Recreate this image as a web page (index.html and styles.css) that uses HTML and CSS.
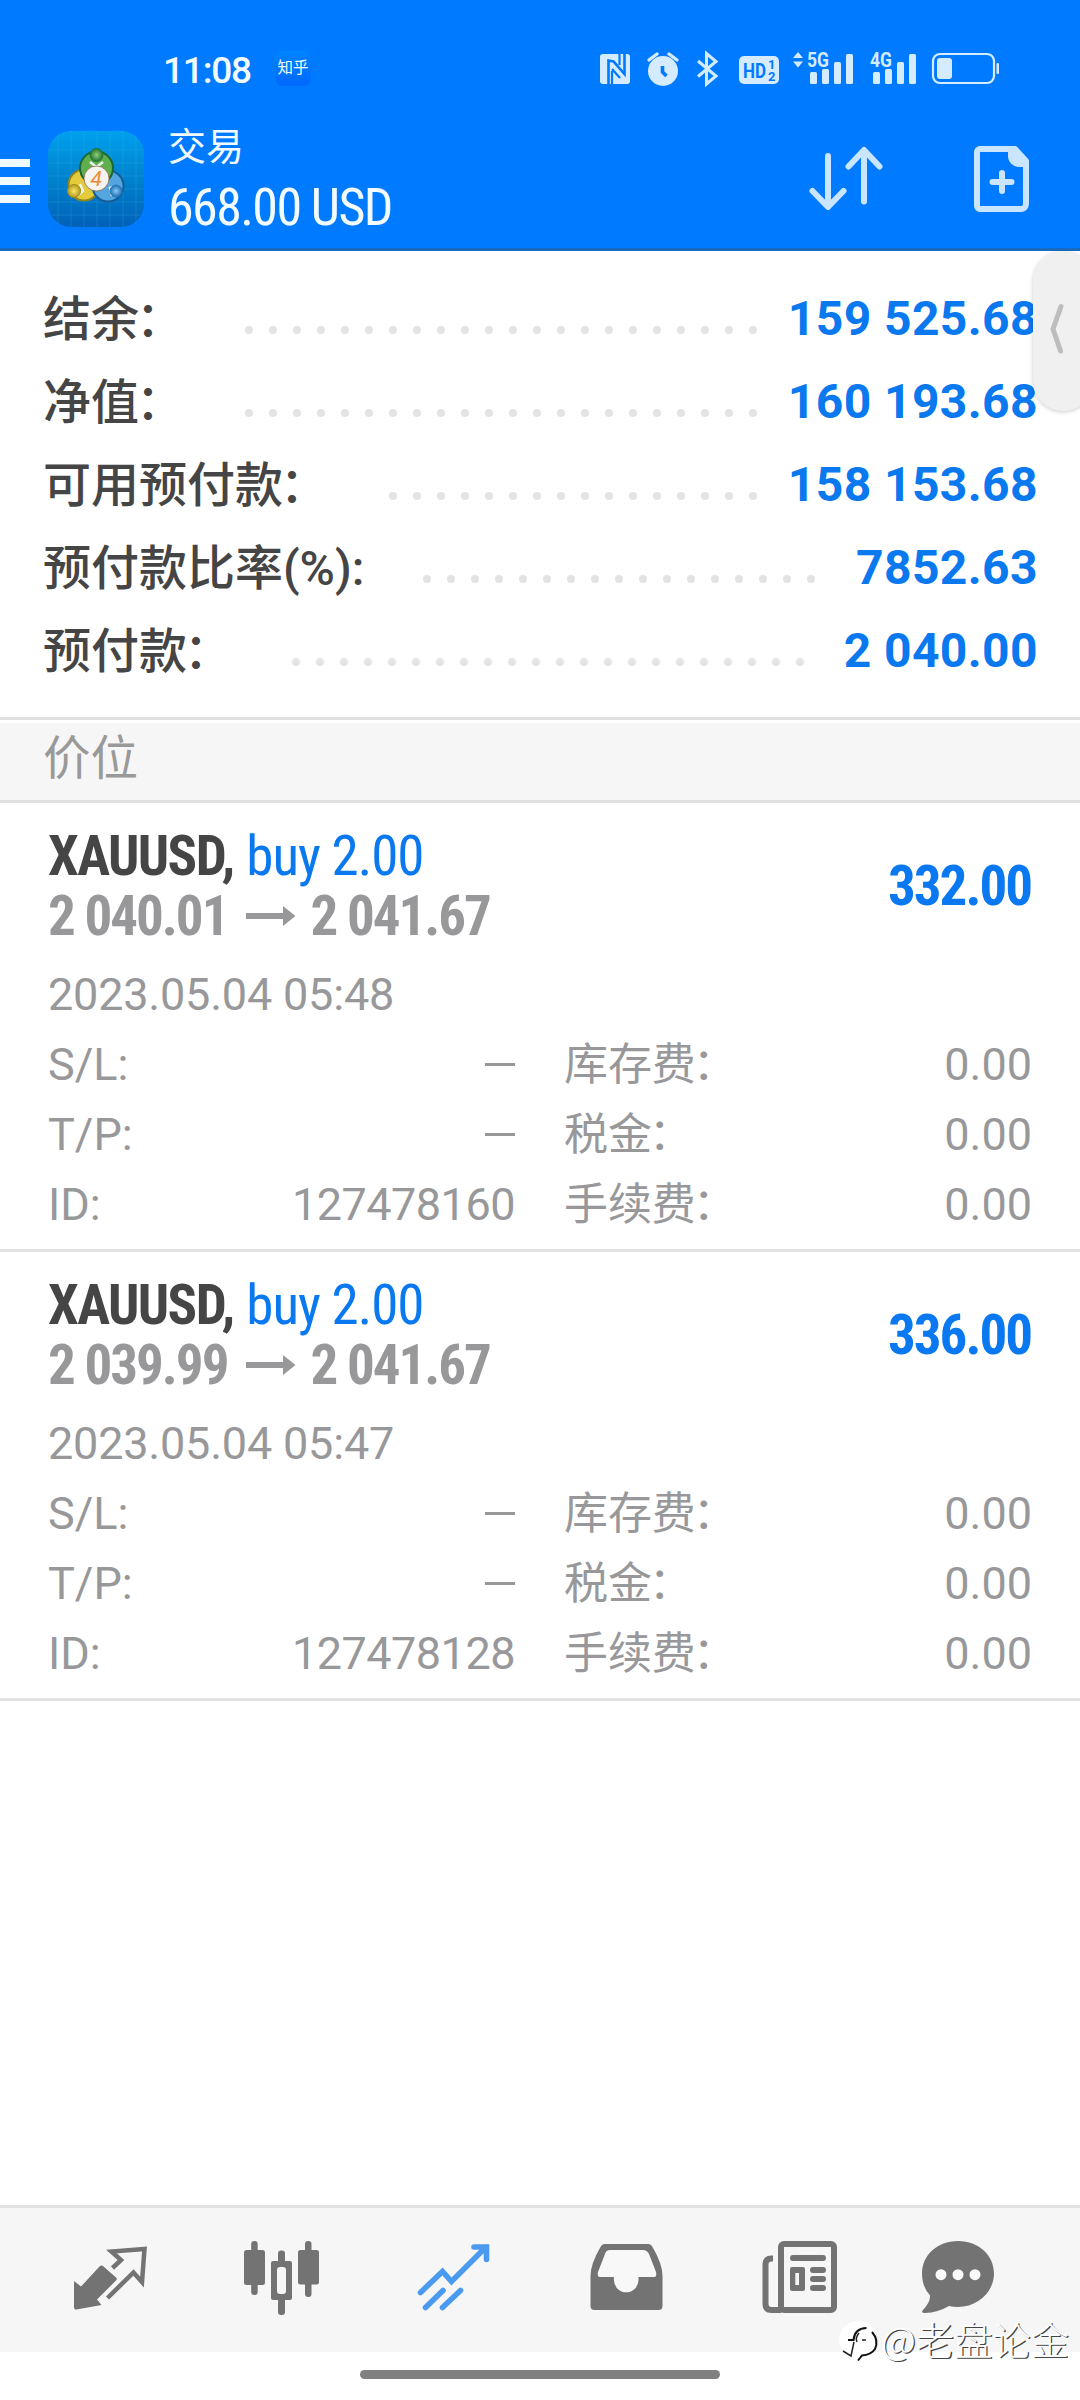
FILE: index.html
```html
<!DOCTYPE html>
<html lang="zh-CN">
<head>
<meta charset="utf-8">
<title>交易</title>
<link rel="stylesheet" href="styles.css">
</head>
<body>
<div class="screen">
  <header class="top">
    <div class="status">
      <span class="clock">11:08</span>
      <span class="zhihu">知乎</span>
      <svg class="status-icons" width="410" height="44" viewBox="595 46 410 44">
        <g fill="#d5ebff">
          <rect x="600" y="54" width="30" height="30" rx="3"/>
          <path d="M608.500 85V60.500l5 1 11 12.500V53" fill="none" stroke="#007aff" stroke-width="2.600"/>
          <path d="M619.500 53v12M612 71v14M612 69l8 9" fill="none" stroke="#007aff" stroke-width="2.200"/>
          <circle cx="663" cy="71" r="15"/>
          <path d="M649 60l8-6M677 60l-8-6" stroke="#d5ebff" stroke-width="3.4" stroke-linecap="round"/>
          <path d="M662.5 66v6l4 4" fill="none" stroke="#007aff" stroke-width="3.6"/>
          <path d="M698 61l18 15-9.500 8V53.500l9.500 8-18 15" fill="none" stroke="#d5ebff" stroke-width="3"/>
          <rect x="739" y="56" width="40" height="28" rx="5"/>
          <path d="M793 58l5-6 5 6zM793 61.500l5 6 5-6z"/>
          <rect x="810" y="72" width="7" height="12" rx="1.500"/><rect x="822" y="69" width="7" height="15" rx="1.500"/><rect x="834" y="62" width="7" height="22" rx="1.500"/><rect x="846" y="54" width="7" height="30" rx="1.500"/>
          <rect x="873" y="72" width="7" height="12" rx="1.500"/><rect x="885" y="69" width="7" height="15" rx="1.500"/><rect x="897" y="62" width="7" height="22" rx="1.500"/><rect x="909" y="54" width="7" height="30" rx="1.500"/>
          <rect x="933" y="54" width="61" height="29" rx="7" fill="none" stroke="#d5ebff" stroke-width="2.200"/>
          <rect x="937" y="58" width="15" height="21" rx="3"/><rect x="996.500" y="63" width="2.500" height="11" rx="1"/>
        </g>
        <text class="hd" x="743" y="78" textLength="23" lengthAdjust="spacingAndGlyphs">HD</text>
        <text class="hd-n" x="768" y="69">1</text><text class="hd-n" x="768" y="81">2</text>
        <text class="net" x="807" y="67" textLength="22" lengthAdjust="spacingAndGlyphs">5G</text>
        <text class="net" x="870" y="67" textLength="22" lengthAdjust="spacingAndGlyphs">4G</text>
      </svg>
    </div>
    <div class="appbar">
      <div class="burger"><i></i><i></i><i></i></div>
      <svg class="logo" width="96" height="96" viewBox="48 131 96 96">
        <defs>
          <linearGradient id="lb" x1="0" y1="0" x2="0" y2="1"><stop offset="0" stop-color="#00a0ee"/><stop offset=".5" stop-color="#0082cc"/><stop offset="1" stop-color="#0061b8"/></linearGradient>
          <radialGradient id="gg"><stop offset="0" stop-color="#8fcf7c"/><stop offset="1" stop-color="#23742f"/></radialGradient>
          <radialGradient id="gy"><stop offset="0" stop-color="#fbe66e"/><stop offset="1" stop-color="#b59a1c"/></radialGradient>
          <radialGradient id="gb"><stop offset="0" stop-color="#8ccbf5"/><stop offset="1" stop-color="#1c6fb5"/></radialGradient>
        </defs>
        <rect x="48" y="131" width="96" height="96" rx="23" fill="url(#lb)"/>
        <path d="M58 134v90M71 131v96M84 131v96M97 131v96M110 131v96M123 131v96M136 135v88M48 150h96M48 163h96M48 176h96M48 189h96M48 202h96M52 215h88" stroke="#45b7f0" stroke-opacity=".22"/>
        <circle cx="84" cy="185" r="15.500" fill="#e3cb3c" stroke="#8b8420" stroke-width="2"/>
        <circle cx="108" cy="186" r="15.500" fill="#53a6df" stroke="#155d96" stroke-width="2"/>
        <circle cx="96.500" cy="168" r="16.500" fill="#5fb04d" stroke="#1b6632" stroke-width="2"/>
        <path d="M90 162l6.500 5 6.500-5M80 184l3 7-6 5M112 196l-2-8 8-2" fill="none" stroke="#e9f7ef" stroke-width="2.500"/>
        <circle cx="96.500" cy="155" r="6.500" fill="url(#gg)" stroke="#23743a"/>
        <circle cx="74" cy="191" r="6.500" fill="url(#gy)" stroke="#9d8a1e"/>
        <circle cx="116" cy="191" r="6" fill="url(#gb)" stroke="#2676b5"/>
        <circle cx="96.500" cy="178.500" r="12.500" fill="#f6f4f1" stroke="#8a6a4a" stroke-width=".8"/>
        <text class="logo-n" x="90.500" y="186">4</text>
      </svg>
      <div class="titles"><span class="title">交易</span><span class="sum cond">668.00 USD</span></div>
      <svg class="actions" width="240" height="90" viewBox="800 136 240 90">
        <g fill="none" stroke="#c9e5ff" stroke-width="6" stroke-linecap="round" stroke-linejoin="round">
          <path d="M828 156v50M812.500 191l15.500 16 15.500-16M864 201.500v-50M848.500 166.500L864 150l15.500 16.500"/>
          <path d="M980 149h35l11 12v43a5 5 0 0 1-5 5h-41a3 3 0 0 1-3-3v-54a3 3 0 0 1 3-3z"/>
          <path d="M1002 173v18M992.500 182h19"/>
        </g>
        <path d="M1008 149h7l12 13v5h-8a11 11 0 0 1-11-11z" fill="#c9e5ff"/>
      </svg>
    </div>
  </header>

  <section class="summary">
    <div class="row"><span class="lab">结余<i class="colon">：</i></span><svg class="dots r1" height="8"><line x1="4" y1="4" x2="508.100" y2="4"/></svg><b>159 525.68</b></div>
    <div class="row"><span class="lab">净值<i class="colon">：</i></span><svg class="dots r1" height="8"><line x1="4" y1="4" x2="508.100" y2="4"/></svg><b>160 193.68</b></div>
    <div class="row"><span class="lab">可用预付款<i class="colon">：</i></span><svg class="dots r3" height="8"><line x1="4" y1="4" x2="364.100" y2="4"/></svg><b>158 153.68</b></div>
    <div class="row"><span class="lab">预付款比率(%):</span><svg class="dots r4" height="8"><line x1="4" y1="4" x2="388.100" y2="4"/></svg><b>7852.63</b></div>
    <div class="row"><span class="lab">预付款<i class="colon">：</i></span><svg class="dots r5" height="8"><line x1="4" y1="4" x2="508.100" y2="4"/></svg><b>2 040.00</b></div>
  </section>

  <h2 class="section">价位</h2>

  <article class="pos">
    <div class="head">
      <div class="lines">
        <div class="sym cond"><b>XAUUSD,</b> <span>buy 2.00</span></div>
        <div class="price cond"><span>2 040.01</span><svg width="50" height="20" viewBox="0 0 50 20"><path d="M0 7h37V0l12.500 10L37 20v-7H0z" fill="#98989a"/></svg><span>2 041.67</span></div>
      </div>
      <div class="profit cond">332.00</div>
    </div>
    <div class="date">2023.05.04 05:48</div>
    <div class="grid">
      <span>S/L:</span><span class="v"><i class="dash"></i></span><span class="c">库存费<i class="colon">：</i></span><span class="v">0.00</span>
      <span>T/P:</span><span class="v"><i class="dash"></i></span><span class="c">税金<i class="colon">：</i></span><span class="v">0.00</span>
      <span>ID:</span><span class="v id">127478160</span><span class="c">手续费<i class="colon">：</i></span><span class="v">0.00</span>
    </div>
  </article>
  <article class="pos">
    <div class="head">
      <div class="lines">
        <div class="sym cond"><b>XAUUSD,</b> <span>buy 2.00</span></div>
        <div class="price cond"><span>2 039.99</span><svg width="50" height="20" viewBox="0 0 50 20"><path d="M0 7h37V0l12.500 10L37 20v-7H0z" fill="#98989a"/></svg><span>2 041.67</span></div>
      </div>
      <div class="profit cond">336.00</div>
    </div>
    <div class="date">2023.05.04 05:47</div>
    <div class="grid">
      <span>S/L:</span><span class="v"><i class="dash"></i></span><span class="c">库存费<i class="colon">：</i></span><span class="v">0.00</span>
      <span>T/P:</span><span class="v"><i class="dash"></i></span><span class="c">税金<i class="colon">：</i></span><span class="v">0.00</span>
      <span>ID:</span><span class="v id">127478128</span><span class="c">手续费<i class="colon">：</i></span><span class="v">0.00</span>
    </div>
  </article>

  <nav class="tabs">
    <svg viewBox="24 2208 172 144"><path d="M74 2281l7 5.500 18.500-20a3 3 0 0 1 4 0l12.500 11a2 2 0 0 1 0 3L97 2299.500l4.500 5.500-25 4.500a2 2 0 0 1-2.500-2z" fill="#737373"/><path d="M112.500 2268l8.500-8-9.500-8.500 33-2.500-2.500 33-8.500-9.500-26 25.500" fill="none" stroke="#737373" stroke-width="4.500"/></svg>
    <svg viewBox="196 2208 172 144"><g fill="#737373"><rect x="251.200" y="2241" width="6.500" height="54" rx="3"/><rect x="244" y="2250" width="21" height="35" rx="2.500"/><rect x="278" y="2250.500" width="7" height="64.500" rx="3"/><rect x="271" y="2261" width="21" height="39" rx="2"/><rect x="305" y="2241" width="6.500" height="56" rx="3"/><rect x="298" y="2250" width="21" height="34.500" rx="2.500"/></g><rect x="277" y="2267" width="9" height="27" rx="3" fill="#f6f6f6"/></svg>
    <svg viewBox="368 2208 172 144"><path d="M420.500 2292.500l22-21 9 10 34.500-34.500M474 2247h12.500v12.500M443 2290.500l-17.500 17M460.500 2290.500l-18 17" fill="none" stroke="#4a9bf0" stroke-width="5.600" stroke-linecap="round"/></svg>
    <svg viewBox="540 2208 172 144"><path d="M605 2244h43q3 0 4.500 3 10 17 10 29v30q0 4-4 4h-64q-4 0-4-4v-30q0-12 10-29 1.500-3 4.500-3z" fill="#737373"/><path d="M610 2250h33q4 0 6 4l7 18q1 5-2 5h-15.500v3a12.300 12.300 0 0 1-24.600 0v-3H600q-3 0-2-5l7-18q1-4 5-4z" fill="#f8f8f8"/></svg>
    <svg viewBox="712 2208 172 144"><g fill="none" stroke="#737373"><rect x="781" y="2244" width="53" height="66" rx="3" stroke-width="6"/><path d="M773 2258.500h-1.500q-6 0-6 6V2304q0 6 6 6h10" stroke-width="6"/><path d="M793 2258h30M813 2270h10M813 2279h10M813 2288h10" stroke-width="6" stroke-linecap="round"/></g><path d="M792 2267h11q2 0 2 2v20q0 2-2 2h-11q-2 0-2-2v-20q0-2 2-2zm3.300 6v12h3.700v-12z" fill="#737373" fill-rule="evenodd"/></svg>
    <svg viewBox="884 2208 172 144"><path d="M958 2241c21 0 36 14.500 36 32.500s-16 33.500-36 33.500q-5 0-9-1-11 6.500-24 7-4 0-2.500-2.500 8-8 7.500-15-8-9-8-22c0-18 15-32.500 36-32.500z" fill="#737373"/><g fill="#fafafa"><circle cx="941" cy="2274.700" r="5.500"/><circle cx="958" cy="2274.700" r="5.500"/><circle cx="975" cy="2274.700" r="5.500"/></g></svg>
  </nav>
  <footer class="home"><i></i></footer>

  <div class="handle"><svg width="16" height="54" viewBox="0 0 16 54"><path d="M12 4.500L4 27l7.500 22" fill="none" stroke="#bdbdbd" stroke-width="5" stroke-linecap="round" stroke-linejoin="round"/></svg></div>
  <div class="mark">
    <svg width="44" height="46" viewBox="836 2318 44 46"><circle cx="857" cy="2340" r="19" fill="#fff"/><path d="M847 2340h5.500q1-11.500 13-12M871 2332q7 8 3 17-4 6-13 6.500l-4 5" fill="none" stroke="#111" stroke-width="2"/><path d="M853 2342l-3 14-8-5M861 2340h4M858 2333q-4 5-2 9" fill="none" stroke="#222" stroke-width="1.500"/></svg>
    <span>@老盘论金</span>
  </div>
</div>
</body>
</html>
```
FILE: styles.css
```css
* { box-sizing: border-box; }
body { margin: 0; background: #fff; font-family: Roboto, "Noto Sans CJK SC", sans-serif; }
i { font-style: normal; }
svg { display: block; flex: none; }
.screen { position: relative; width: 1080px; height: 2400px; overflow: hidden; display: flex; flex-direction: column; background: #fff; }
.cond { font-family: Roboto, "Noto Sans CJK SC", sans-serif; font-stretch: 75%; white-space: pre; }
.colon { margin-left: -3px; }

.top { height: 251px; background: #007aff; border-bottom: 3px solid #1a6bbd; color: #f2fbff; flex: none; }
.status { display: flex; height: 90px; padding-top: 46px; align-items: center; }
.clock { margin-left: 163px; width: 112px; padding-top: 5px; font-size: 37px; font-weight: 500; font-stretch: 90%; letter-spacing: -1.2px; line-height: 44px; }
.zhihu { width: 36px; height: 35px; border-radius: 8px; background: linear-gradient(#0084ff, #0068ff); font-size: 15.500px; line-height: 35px; text-align: center; }
.status-icons { margin-left: 284px; }
.hd { font: 700 21px Roboto, sans-serif; fill: #007aff; }
.hd-n { font: 700 13px Roboto, sans-serif; fill: #007aff; }
.net { font: 700 21px Roboto, sans-serif; fill: #d5ebff; }
.appbar { display: flex; height: 158px; align-items: flex-start; }
.burger { width: 30px; margin-top: 69px; display: flex; flex-direction: column; gap: 10px; }
.burger i { height: 8px; background: #eefaff; }
.logo { margin: 41px 0 0 18px; }
.logo-n { font: italic 400 21px Roboto, sans-serif; fill: #f08a35; }
.titles { display: flex; flex-direction: column; margin: 31px 0 0 24px; width: 632px; }
.title { font-size: 38px; line-height: 52px; }
.sum { font-size: 52px; line-height: 70px; letter-spacing: -1.600px; }
.actions { margin-top: 46px; }

.summary { padding: 26px 42px 0 43px; height: 466px; flex: none; }
.row { display: flex; height: 83px; align-items: center; color: #454545; }
.lab { flex: 1; font-size: 48px; font-weight: 500; line-height: 83px; padding-top: 2px; white-space: nowrap; }
.row b { font-size: 48px; line-height: 83px; letter-spacing: .4px; color: #0a78ee; white-space: pre; text-align: right; }
.dots { margin-top: 22px; }
.dots line { stroke: #e3e3e3; stroke-width: 8; stroke-linecap: round; stroke-dasharray: 0 24; }
.r1 { width: 512px; margin-right: 31px; }
.r3 { width: 368px; margin-right: 31px; }
.r4 { width: 392px; margin-right: 41px; }
.r5 { width: 512px; margin-right: 40px; }

.section { margin: 0; height: 86px; flex: none; padding-left: 43px; border-top: 3px solid #e1e1e1; border-bottom: 3px solid #e1e1e1; background: #f6f6f6; box-shadow: inset 0 3px #fff; font-size: 47.500px; font-weight: 400; line-height: 78px; color: #999; }

.pos { height: 449px; flex: none; border-bottom: 3px solid #e3e3e3; padding: 23px 48px 0; color: #98989a; }
.head { display: flex; justify-content: space-between; align-items: center; height: 120px; }
.sym, .price { height: 59px; line-height: 59px; font-size: 55px; }
.sym b { color: #454545; letter-spacing: -1.600px; }
.sym span { color: #0a78ee; letter-spacing: -1px; }
.price { display: flex; align-items: center; font-weight: 700; letter-spacing: -2px; padding-top: 1px; }
.price svg { margin: 0 14px 0 19px; }
.profit { font-size: 55px; font-weight: 700; letter-spacing: -2px; margin-right: 1px; color: #0a78f0; }
.date { font-size: 45px; letter-spacing: -.2px; line-height: 72px; height: 70px; margin-top: 13px; }
.grid { display: grid; grid-template-columns: 100px 367px 300px 1fr; grid-auto-rows: 70px; line-height: 72px; font-size: 45px; }
.v { text-align: right; }
.id { letter-spacing: -.5px; }
.c { padding-left: 49px; font-size: 44px; letter-spacing: -.1px; white-space: nowrap; }
.dash { display: inline-block; width: 30px; height: 3px; background: #98989a; vertical-align: 14px; }

.tabs { margin-top: auto; height: 147px; flex: none; display: flex; padding: 0 24px; background: #f6f6f6; border-top: 3px solid #e3e3e3; }
.tabs svg { width: 172px; height: 144px; }
.home { height: 48px; flex: none; display: flex; justify-content: center; padding-top: 18px; }
.home i { width: 360px; height: 9px; border-radius: 5px; background: #808080; }

.handle { position: absolute; left: 1033px; top: 251px; width: 60px; height: 160px; border-radius: 30px; background: #f0f0f0; box-shadow: 0 1px 4px rgba(0,0,0,.2); padding: 51px 0 0 16px; }
.mark { position: absolute; left: 837px; top: 2314px; display: flex; align-items: center; }
.mark svg { margin-top: 4px; }
.mark span { font-family: "Noto Sans CJK SC", sans-serif; font-size: 38.300px; font-weight: 300; line-height: 42px; color: #fff; text-shadow: 1.300px 1.300px 0 #444; white-space: nowrap; }
```
